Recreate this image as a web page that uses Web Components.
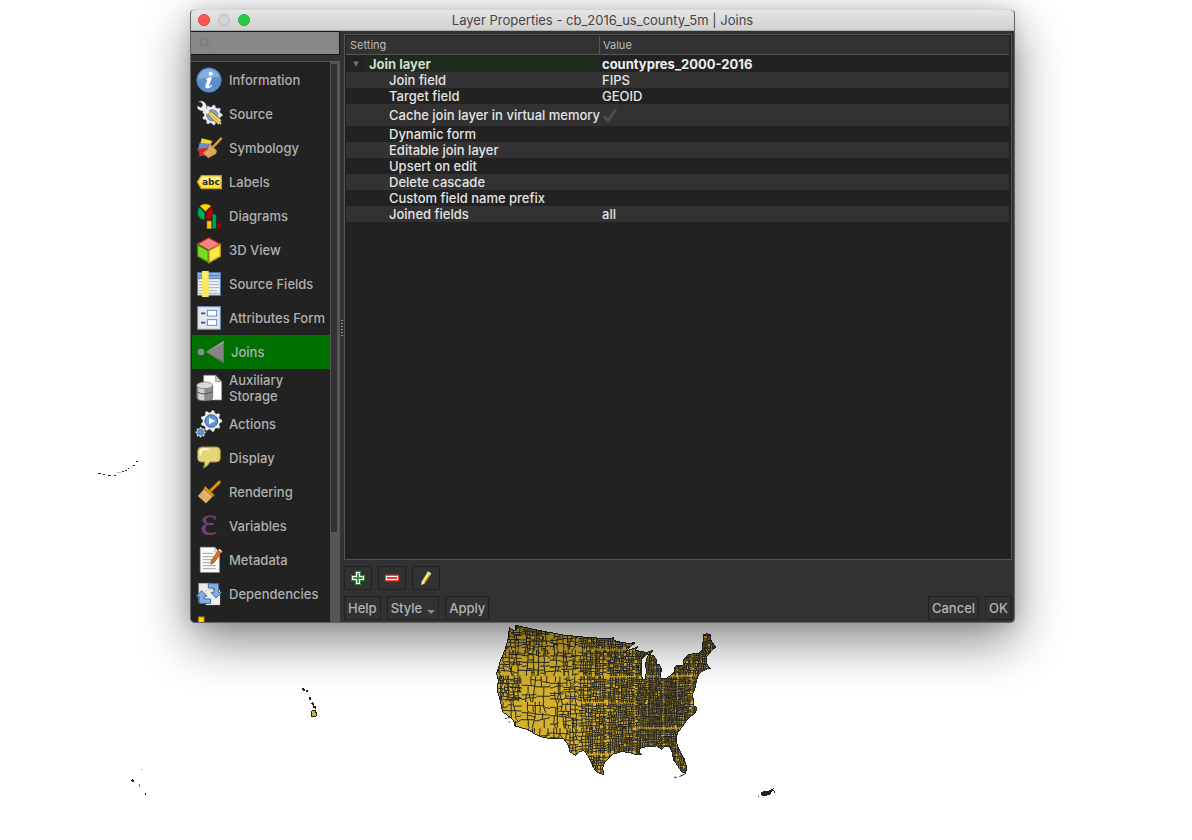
<!DOCTYPE html>
<html lang="en">
<head>
<meta charset="utf-8">
<title>Layer Properties</title>
<style>
html, body { margin: 0; height: 100%; }
body { background: #fff; font: 500 13px/16px Inter, "Liberation Sans", sans-serif; overflow: hidden; }
</style>
</head>
<body>
<desktop-view>
  <county-map slot="map"></county-map>
  <layer-dialog heading="Layer Properties - cb_2016_us_county_5m | Joins">
    <page-list slot="pages">
      <page-item icon="info">Information</page-item>
      <page-item icon="source">Source</page-item>
      <page-item icon="symbology">Symbology</page-item>
      <page-item icon="labels">Labels</page-item>
      <page-item icon="diagrams">Diagrams</page-item>
      <page-item icon="cube">3D View</page-item>
      <page-item icon="fields">Source Fields</page-item>
      <page-item icon="form">Attributes Form</page-item>
      <page-item icon="joins" selected>Joins</page-item>
      <page-item icon="storage">Auxiliary<br>Storage</page-item>
      <page-item icon="actions">Actions</page-item>
      <page-item icon="display">Display</page-item>
      <page-item icon="rendering">Rendering</page-item>
      <page-item icon="variables">Variables</page-item>
      <page-item icon="metadata">Metadata</page-item>
      <page-item icon="dependencies">Dependencies</page-item>
      <page-item icon="legend"></page-item>
    </page-list>
    <join-tree slot="content"></join-tree>
    <tool-button slot="tools" icon="add" label="Add join"></tool-button>
    <tool-button slot="tools" icon="remove" label="Remove join"></tool-button>
    <tool-button slot="tools" icon="edit" label="Edit join"></tool-button>
    <push-button slot="left">Help</push-button>
    <push-button slot="left" menu>Style</push-button>
    <push-button slot="left">Apply</push-button>
    <push-button slot="right">Cancel</push-button>
    <push-button slot="right">OK</push-button>
  </layer-dialog>
</desktop-view>
<script>
const gear = (cx, cy, r, teeth) => {
  let d = '';
  for (let i = 0; i < teeth * 4; i++) {
    const a = (i - .5) * Math.PI / (teeth * 2), k = i % 4 < 2 ? r : r * .8;
    d += (i ? 'L' : 'M') + (cx + k * Math.cos(a)).toFixed(1) + ' ' + (cy + k * Math.sin(a)).toFixed(1);
  }
  return d + 'Z';
};

const ICONS = {
  info: `<circle cx="36" cy="36" r="37" fill="#5e8fcc" stroke="#4474b0" stroke-width="2"/><path d="M3 35A33 33 0 0 1 68 28Q30 24 3 35Z" fill="#86aede"/><circle cx="41" cy="17" r="6" fill="#fff"/><path d="M26 32Q36 27 45 27L36 53Q37 56 44 50L45 53Q36 64 27 60Q23 57 26 50L32 34L26 35Z" fill="#fff"/>`,
  source: `<path d="${gear(46, 39, 30, 9)}" fill="#eee" stroke="#bbb"/><circle cx="46" cy="40" r="17" fill="#7da2d4" stroke="#4b6b99" stroke-width="2"/><path d="M5-1Q16-6 25 4Q31 12 27 19L52 41L45 49L21 26Q10 30 1 19L2 12L12 17L18 9L13 1Z" fill="#f4f4f4" stroke="#999"/><path d="M32 38L42 28L73 54L65 68Z" fill="#efd66a" stroke="#8a742a" stroke-width="3"/><path d="M40 36L66 60" stroke="#a18d35" stroke-width="2"/><path d="M66 65L71 58L73 67Z" fill="#ddd"/>`,
  symbology: `<path d="M14 7L46 15L34 40L8 31Z" fill="#f2d439"/><path d="M8 20L43 24L34 46L3 40Z" fill="#638fd2"/><path d="M-1 39L34 35L42 58L5 61L8 52Z" fill="#e12922"/><path d="M48 33L72 8" stroke="#8a5514" stroke-width="9" stroke-linecap="round"/><path d="M49 32L72 8" stroke="#dda13e" stroke-width="6" stroke-linecap="round"/><path d="M38 23L60 44L56 54L34 66L17 51L31 40Z" fill="#e1b06a" stroke="#95642b" stroke-width="2"/><path d="M35 27L57 49M37 38L23 54M44 43L30 59M51 48L38 61" stroke="#b98345" stroke-width="2"/>`,
  labels: `<path d="M1 36L13 17H73V56H13Z" fill="#ffe141" stroke="#c79b05" stroke-width="4"/><path d="M14 20H70V34H8Z" fill="#fff39a"/><text x="15" y="44" font-family="DejaVu Sans" font-weight="bold" font-size="27" fill="#292c34">abc</text>`,
  diagrams: `<path d="M25 22L9 6Q25-6 42 6Z" fill="#ffda00" stroke="#a67b00" stroke-width="2"/><path d="M23 26V48Q4 46 2 27Q2 15 8 9Z" fill="#00a958" stroke="#006036" stroke-width="2"/><path d="M27 26L43 9Q50 17 49 29L40 47H27Z" fill="#b4060b" stroke="#700407" stroke-width="2"/><rect x="30" y="51" width="13" height="23" fill="#ffc20d" stroke="#ab7b00" stroke-width="2"/><rect x="46" y="31" width="11" height="42" fill="#00a856" stroke="#005f33" stroke-width="2"/><rect x="61" y="56" width="11" height="17" fill="#910a0e" stroke="#6a0305" stroke-width="2"/>`,
  cube: `<path d="M35-1L70 18L35 37L1 18Z" fill="#f48585" stroke="#be1b20" stroke-width="4"/><path d="M1 19L34 38V74L2 55Z" fill="#7cda20" stroke="#357d0c" stroke-width="4"/><path d="M70 19L36 38V74L70 55Z" fill="#fce947" stroke="#b89315" stroke-width="4"/>`,
  fields: `<rect x="2" y="2" width="68" height="68" fill="#f3f3f2" stroke="#527fb7" stroke-width="3"/><path d="M3 3H69V20H3Z" fill="#8aafe0"/><path d="M3 20H69M7 11H66" stroke="#527fb7" stroke-width="3"/><path d="M6 29H66M6 38H66M6 47H66M6 56H60M6 64H66" stroke="#9cb1cd" stroke-width="3"/><rect x="15" y="-3" width="20" height="78" fill="#fbe85d"/><path d="M22 8H29V15H22Z" fill="#fff4b0"/>`,
  form: `<rect x="2" y="2" width="68" height="68" fill="#e7e8e9" stroke="#6e93c6" stroke-width="3"/><path d="M12 22H25M12 50H25" stroke="#355582" stroke-width="5"/><rect x="31" y="13" width="28" height="17" fill="#fff" stroke="#5d8bcd" stroke-width="3"/><rect x="31" y="41" width="28" height="17" fill="#fff" stroke="#5d8bcd" stroke-width="3"/>`,
  joins: `<circle cx="12" cy="36" r="10" fill="#8c8c8c"/><path d="M27 36L80 3V69Z" fill="#858585"/><path d="M27 36L80 3V9Z" fill="#a2a2a2"/><path d="M27 36L80 63V69Z" fill="#6d6d6d"/>`,
  storage: `<path d="M20-2H56L74 17V72H20Z" fill="#fff" stroke="#8c8c8c" stroke-width="2"/><path d="M56-2V17H74Z" fill="#ccc" stroke="#777" stroke-width="2"/><path d="M-1 29V65Q0 75 23 75Q46 75 47 65V29Z" fill="#8d8d8d" stroke="#555" stroke-width="2"/><path d="M4 34V69Q11 73 22 73V34Z" fill="#d2d2d2"/><ellipse cx="23" cy="28" rx="24" ry="10" fill="#d9d9d9" stroke="#666" stroke-width="2"/><path d="M-1 47Q22 61 47 47" fill="none" stroke="#4d4d4d" stroke-width="3"/>`,
  actions: `<path d="${gear(43, 27, 32, 9)}" fill="#f0f0ee" stroke="#a2a2a2"/><circle cx="43" cy="27" r="19" fill="#5e94d8" stroke="#355d91" stroke-width="3"/><path d="M36 17L55 27L36 37Z" fill="#fff"/><path d="${gear(11, 61, 15, 8)}" fill="#e5e5e5" stroke="#aaa"/><circle cx="11" cy="61" r="9" fill="#5e94d8" stroke="#355d91" stroke-width="2"/>`,
  display: `<path d="M13 3H60Q70 4 70 15V37Q70 48 58 48H39Q32 62 19 66Q24 57 23 48H13Q2 48 2 37V15Q3 4 13 3Z" fill="#e3d578" stroke="#9c8b30" stroke-width="3"/><path d="M10 25Q9 11 22 10H33" fill="none" stroke="#fff8d6" stroke-width="6" stroke-linecap="round"/>`,
  rendering: `<path d="M40 33L67 6" stroke="#936008" stroke-width="10" stroke-linecap="round"/><path d="M40 33L67 6" stroke="#e5991b" stroke-width="6" stroke-linecap="round"/><path d="M26 22L50 46L27 70L3 48Z" fill="#e5bc79" stroke="#ad711c" stroke-width="2"/><path d="M25 19L52 45L47 51L20 26Z" fill="#e0941b" stroke="#93600e" stroke-width="2"/><path d="M14 36L37 59M9 43L31 65M21 35L10 49M28 40L15 57M36 48L23 65" stroke="#d09a50" stroke-width="2"/>`,
  variables: `<text x="9" y="63" font-family="Liberation Serif" font-size="124" fill="#704276">ε</text>`,
  metadata: `<path d="M10-2H53L67 13V73H10Z" fill="#fbfbfb" stroke="#b5b5b5" stroke-width="2"/><path d="M53-2V13H67Z" fill="#ddd" stroke="#888"/><path d="M17 16H48M17 26H49M17 35H44M17 44H42M17 53H56M17 62H56" stroke="#a2a2a2" stroke-width="3"/><path d="M43 38L65 5L74 12L52 43L42 49Z" fill="#e86b18" stroke="#934010" stroke-width="2"/><path d="M63 7L67 2L76 9L73 14Z" fill="#f7eeee" stroke="#c12d19" stroke-width="2"/><path d="M42 49L43 38L52 43Z" fill="#777"/>`,
  dependencies: `<path d="M5 4H49V61H5Z" fill="#e9e9e7" stroke="#aaa"/><path d="M27 24H69V69H27Z" fill="#f0f0ee" stroke="#aaa"/><path d="M34 5H65V31H74L57 48L42 31H51V18H34Z" fill="#87aee0" stroke="#3f6fae" stroke-width="3"/><path d="M14 26L30 43H21V51H41V64H7V43H-2Z" fill="#87aee0" stroke="#3f6fae" stroke-width="3"/>`,
  legend: `<rect x="5" y="3" width="16" height="18" fill="#ffd800" stroke="#c78a00" stroke-width="3"/>`,
  add: `<path d="M12 0H30V12H42V30H30V42H12V30H0V12H12Z" fill="#3b8740"/><path d="M15 3H27V15H39V27H27V39H15V27H3V15H15Z" fill="#fff"/><path d="M18 6H24V18H36V24H24V36H18V24H6V18H18Z" fill="#4a904e"/>`,
  remove: `<rect x="1" y="13" width="40" height="16" fill="#fff" stroke="#f0443d" stroke-width="4"/><path d="M6 21H36" stroke="#ee352f" stroke-width="6"/>`,
  edit: `<path d="M8 31L26 3L36 9L18 36L8 42Z" fill="#e8c937" stroke="#76621a" stroke-width="2"/><path d="M12 31L29 5" stroke="#fff0a0" stroke-width="4"/><path d="M26 1L37 7L34 12L23 6Z" fill="#d6d6d6"/><path d="M7 42L9 31L18 36Z" fill="#eee"/>`
};

class Base extends HTMLElement {
  constructor() { super(); this.attachShadow({ mode: 'open' }); }
  draw(css, html) { this.shadowRoot.innerHTML = `<style>*{box-sizing:border-box}${css}</style>${html}`; }
}

customElements.define('desktop-view', class extends Base {
  connectedCallback() {
    this.draw(`:host{display:block;position:relative;min-height:100vh;padding:9px 177px 0 190px;box-sizing:border-box}
      ::slotted(county-map){position:absolute;inset:0}`,
      `<slot name="map"></slot><slot></slot>`);
  }
});

customElements.define('county-map', class extends Base {
  connectedCallback() {
    let seed = 7;
    const rnd = () => (seed = (seed * 16807) % 2147483647) / 2147483647;
    let lines = '';
    // Average county size by place: wide in the West, smallest around the Appalachians.
    const size = (x, y) => {
      const peak = Math.hypot((x - 555) / 85, (y - 285) / 120);
      if (peak < 1) return 5.5 + peak * 1.5;
      if (x < 120 && y > 200 && y < 270) return 10;
      if (y < 130 && x < 200) return 12;
      if (x < 250) return y < 190 ? 17 : 23;
      if (x < 320) return 17 - (x - 250) / 10;
      return x < 480 ? 9.5 - (x - 320) / 80 : 7.4;
    };
    const split = (x, y, w, h) => {
      const s = size(x + w / 2, y + h / 2) * (.8 + rnd() * .7);
      if (w < s && h < s) return;
      const west = x < 280, range = west ? .4 : .2;
      const k = .5 - range / 2 + rnd() * range;
      const skew = () => (rnd() - .5) * Math.min(w, h) * (west ? .3 : .12);
      if (w > h) {
        const m = x + w * k, a = m + skew(), b = m + skew(), j = y + h * rnd();
        lines += `M${a.toFixed(1)} ${y.toFixed(1)}L${a.toFixed(1)} ${j.toFixed(1)}L${b.toFixed(1)} ${(y + h).toFixed(1)}`;
        split(x, y, w * k, h); split(m, y, w * (1 - k), h);
      } else {
        const m = y + h * k, a = m + skew(), b = m + skew();
        lines += `M${x.toFixed(1)} ${a.toFixed(1)}L${(x + w * rnd()).toFixed(1)} ${a.toFixed(1)}L${(x + w).toFixed(1)} ${b.toFixed(1)}`;
        split(x, y, w, h * k); split(x, m, w, h * (1 - k));
      }
    };
    for (let x = 40; x < 720; x += 85) for (let y = 40; y < 505; y += 78) split(x, y + rnd() * 6, 85, 78);
    const land = 'M88 52L100 62L108 58L107 46L125 50L180 62L250 75L330 83L395 86L398 80L403 92L420 96L445 100L466 98L450 110L438 122L455 118L475 110L466 120L480 124L500 127L518 122L512 132L497 135L486 148L484 165L484 195L489 209L496 207L499 185L497 160L500 145L507 133L522 138L530 150L528 165L537 163L545 178L540 200L545 207L560 205L585 185L584 172L590 167L610 165L612 148L625 133L655 130L668 120L670 75L680 71L690 73L694 95L708 110L695 122L680 140L678 160L692 176L680 177L665 185L655 195L650 210L645 235L636 255L642 270L640 285L652 296L645 310L625 325L608 348L592 370L588 395L598 420L612 445L620 470L617 490L605 485L592 465L580 450L578 430L570 412L557 408L545 418L530 408L500 410L480 415L478 425L485 435L465 433L450 428L425 425L400 432L375 455L368 475L371 493L352 488L340 472L325 440L312 422L298 425L286 436L270 425L265 405L250 385L218 387L180 380L140 358L105 348L100 330L68 305L60 270L52 240L55 210L50 190L62 150L75 120L85 85Z';
    this.draw(`:host{display:block}svg{display:block}`,
      `<svg width="1192" height="840" viewBox="0 0 1192 840" aria-hidden="true">
        <defs><clipPath id="land"><path d="${land}"/></clipPath></defs>
        <g transform="translate(480 610) scale(.33333)">
          <path d="${land}" fill="#d4b02c"/>
          <g clip-path="url(#land)">
            <path d="${lines}" fill="none" stroke="#262626" stroke-width="3"/>
          </g>
          <path d="${land}" fill="none" stroke="#242424" stroke-width="3" shape-rendering="crispEdges"/>
          <path d="M75 325H81M84 323H91M86 335L90 338M582 502L590 502M598 500L615 492" stroke="#242424" stroke-width="3" fill="none"/>
        </g>
        <g fill="none" stroke="#222" stroke-width="1" shape-rendering="crispEdges">
          <path d="M98 473H101M103 474H105M108 475H111M114 475H116M122 471H124M125 470H127M128 468H129M133 465H135M136 461H138" />
          <path d="M117 472H121M131 467H132" stroke="#bbb"/>
          <path d="M302 689L305 690M306 691H308M310 697V700M312 703L314 705M313 706L316 708M132 780L134 782M145 794H146" stroke-width="2"/>
          <path d="M141 769H142M139 784L140 787" stroke="#777"/>
          <path d="M311 716L312 711L315 710L317 715L315 717Z" fill="#d4b02c"/>
          <path d="M758 796H759M774 791L775 793M772 790H774"/>
          <path d="M761 793L765 791H769L773 789L770 794L763 796Z" fill="#222"/>
        </g>
      </svg>`);
  }
});

customElements.define('layer-dialog', class extends Base {
  connectedCallback() {
    this.draw(`:host{display:flex;position:relative;flex-direction:column;height:calc(100vh - 226px);box-sizing:border-box;border:1px solid #646464;border-top-color:#d8d8d8;border-radius:5px;overflow:hidden;background:#323232;box-shadow:0 18px 50px rgba(0,0,0,.48),0 0 14px rgba(0,0,0,.12)}
      header{display:grid;grid-template-columns:1fr auto 1fr;align-items:center;height:21px;padding:0 7px;background:linear-gradient(#e6e6e6,#d0d0d0);color:#454545;border-bottom:1px solid #a9adab;flex:none;font-weight:400}
      h1{font:inherit;margin:0}
      .lights{display:flex;gap:8px}
      .lights button{width:12px;height:12px;border-radius:50%;border:1px solid #e0443e;background:#fc5650;padding:0}
      .lights button:nth-child(2){background:#d2d2d2;border-color:#bababa}
      .lights button:nth-child(3){background:#28c840;border-color:#23b138}
      main{flex:1;display:flex;min-height:0}
      aside{width:149px;flex:none;display:flex;flex-direction:column;gap:6px}
      label{display:flex;align-items:center;height:24px;border:1px solid #161616;border-left:0;background:#878787;padding-left:8px;flex:none}
      input{flex:1;min-width:0;border:0;background:none;outline:0;font:inherit}
      ::slotted(page-list){flex:1;min-height:0}
      .grip{width:4px;flex:none;display:flex;flex-direction:column;align-items:center;justify-content:center;gap:1px;padding-top:4px}
      .grip i{width:2px;height:1px;background:#909090;margin-bottom:1px}
      section{flex:1;min-width:0;display:flex;flex-direction:column;gap:6px;padding:3px 2px 2px 0}
      ::slotted(join-tree){flex:1;min-height:0}
      .row{display:flex;gap:6px}
      .space{flex:1}`,
      `<header><div class="lights"><button aria-label="Close"></button><button aria-label="Minimize"></button><button aria-label="Zoom"></button></div><h1>${this.getAttribute('heading')}</h1><span></span></header>
      <main><aside><label><svg width="12" height="12" viewBox="0 0 12 12" fill="none" stroke="#777" stroke-width="1"><circle cx="5" cy="5" r="4"/><path d="M8 8L12 12"/></svg><input type="text" aria-label="Search"></label><slot name="pages"></slot></aside>
      <div class="grip">${'<i></i>'.repeat(6)}</div>
      <section><slot name="content"></slot><div class="row"><slot name="tools"></slot></div>
      <div class="row"><slot name="left"></slot><span class="space"></span><slot name="right"></slot></div></section></main>`);
  }
});

customElements.define('page-list', class extends Base {
  connectedCallback() {
    this.draw(`:host{display:flex;border-top:1px solid #555;border-right:1px solid #555;background:#222;overflow:hidden;box-sizing:border-box}
      nav{flex:1;min-width:0;padding:1px 0 0 1px;overflow:hidden}
      .bar{width:9px;background:#555;padding:1px 1px 0 0;flex:none}
      .thumb{height:84%;background:#323232;border:1px solid #555}`,
      `<nav aria-label="Pages"><slot></slot></nav><div class="bar"><div class="thumb"></div></div>`);
  }
});

customElements.define('page-item', class extends Base {
  connectedCallback() {
    const on = this.hasAttribute('selected'), w = on ? 26 : 24;
    this.draw(`:host{display:block}
      button{display:flex;align-items:center;gap:8px;width:100%;min-height:34px;padding:3px 0 3px 5px;border:0;background:${on ? '#007000' : 'none'};color:#b0b0b0;font:inherit;text-align:left;white-space:nowrap}
      svg{flex:none;overflow:visible}`,
      `<button aria-current="${on ? 'page' : 'false'}"><svg width="${w}" height="24" viewBox="0 0 ${w * 3} 72" fill="none" aria-hidden="true">${ICONS[this.getAttribute('icon')]}</svg><span><slot></slot></span></button>`);
  }
});

customElements.define('join-tree', class extends Base {
  connectedCallback() {
    const rows = [['Join field', 'FIPS'], ['Target field', 'GEOID'], ['Cache join layer in virtual memory', null], ['Dynamic form', ''], ['Editable join layer', ''], ['Upsert on edit', ''], ['Delete cascade', ''], ['Custom field name prefix', ''], ['Joined fields', 'all']];
    const check = `<svg width="16" height="16" viewBox="0 0 16 16" fill="none" role="img" aria-label="Yes"><path d="M2 9L6 14L14 2" stroke="#4c4c4c" stroke-width="3"/></svg>`;
    this.draw(`:host{display:block;border:1px solid #555;background:#222;padding:1px 2px 0 1px;box-sizing:border-box}
      table{width:100%;border-collapse:separate;border-spacing:0;table-layout:fixed}
      col:first-child{width:254px}
      th,td{text-align:left;padding:0;height:16px;line-height:16px;white-space:nowrap;color:#e4e4e4;font-weight:450}
      thead th{height:19px;font-weight:400;font-size:11px;color:#bcbcbc;background:#323232;border-bottom:1px solid #555;padding-left:4px}
      thead th:first-child{border-right:1px solid #555}
      tbody tr:nth-child(even){background:#323232}
      tbody th{padding-left:43px}
      td{padding-left:2px}
      thead th:last-child{padding-left:3px}
      .top th,.top td{font-weight:700;height:17px;color:#eee}
      .top th{padding-left:0}
      .node{display:flex}
      .node button{width:20px;border:0;padding:0;background:none;color:#777;font:7px/16px "DejaVu Sans"}
      .node span{flex:1;background:#20291f;padding-left:3px;color:#d2dccb}
      .tall th,.tall td{height:22px}
      svg{display:block}`,
      `<table><colgroup><col><col></colgroup><thead><tr><th>Setting</th><th>Value</th></tr></thead><tbody>
      <tr class="top"><th scope="row"><div class="node"><button aria-label="Collapse">▼</button><span>Join layer</span></div></th><td>countypres_2000-2016</td></tr>
      ${rows.map(([k, v]) => `<tr${v === null ? ' class="tall"' : ''}><th scope="row">${k}</th><td>${v === null ? check : v}</td></tr>`).join('')}
      </tbody></table>`);
  }
});

customElements.define('tool-button', class extends Base {
  connectedCallback() {
    this.draw(`:host{display:block}button{display:grid;place-items:center;width:28px;height:24px;padding:0;border:1px solid #222;background:#323232}svg{display:block}`,
      `<button aria-label="${this.getAttribute('label')}"><svg width="14" height="14" viewBox="0 0 42 42" fill="none">${ICONS[this.getAttribute('icon')]}</svg></button>`);
  }
});

customElements.define('push-button', class extends Base {
  connectedCallback() {
    const menu = this.hasAttribute('menu');
    this.draw(`:host{display:block}button{display:flex;align-items:center;gap:5px;height:24px;padding:0 3px;border:1px solid #222;background:#323232;color:#b4b4b4;font:inherit;font-weight:450}
      i{border:4px solid transparent;border-top-color:#8a8a8a;border-bottom:0;margin-top:8px}`,
      `<button><slot></slot>${menu ? '<i></i>' : ''}</button>`);
  }
});
</script>
</body>
</html>
